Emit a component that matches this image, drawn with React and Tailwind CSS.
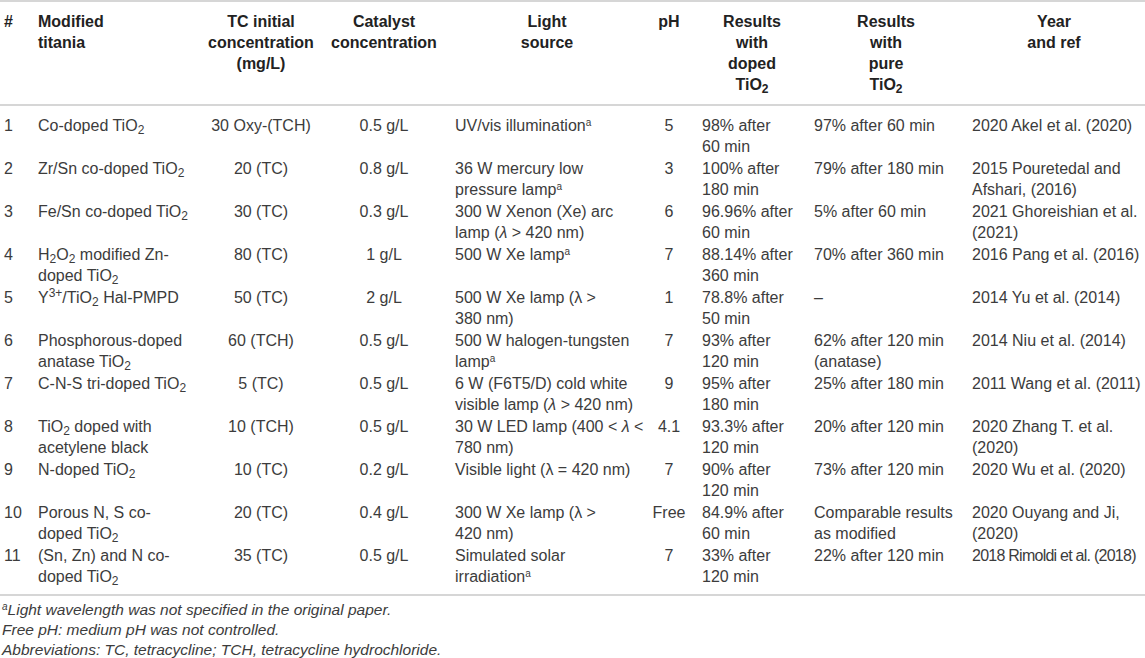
import React from "react";

const T = () => (
  <>
    TiO<sub>2</sub>
  </>
);
const A = () => <sup className="text-[10px]">a</sup>;
const L = ({ it }) => (it ? <span className="italic">λ</span> : <>λ</>);

const rows = [
  ["1", [<>Co-doped <T /></>], ["30 Oxy-(TCH)"], ["0.5 g/L"], [<>UV/vis illumination<A /></>], ["5"], ["98% after", "60 min"], ["97% after 60 min"], ["2020 Akel et al. (2020)"]],
  ["2", [<>Zr/Sn co-doped <T /></>], ["20 (TC)"], ["0.8 g/L"], ["36 W mercury low", <>pressure lamp<A /></>], ["3"], ["100% after", "180 min"], ["79% after 180 min"], ["2015 Pouretedal and", "Afshari, (2016)"]],
  ["3", [<>Fe/Sn co-doped <T /></>], ["30 (TC)"], ["0.3 g/L"], ["300 W Xenon (Xe) arc", <>lamp (<L it /> &gt; 420 nm)</>], ["6"], ["96.96% after", "60 min"], ["5% after 60 min"], ["2021 Ghoreishian et al.", "(2021)"]],
  ["4", [<>H<sub>2</sub>O<sub>2</sub> modified Zn-</>, <>doped <T /></>], ["80 (TC)"], ["1 g/L"], [<>500 W Xe lamp<A /></>], ["7"], ["88.14% after", "360 min"], ["70% after 360 min"], ["2016 Pang et al. (2016)"]],
  ["5", [<>Y<sup>3+</sup>/<T /> Hal-PMPD</>], ["50 (TC)"], ["2 g/L"], [<>500 W Xe lamp (<L /> &gt;</>, "380 nm)"], ["1"], ["78.8% after", "50 min"], ["–"], ["2014 Yu et al. (2014)"]],
  ["6", ["Phosphorous-doped", <>anatase <T /></>], ["60 (TCH)"], ["0.5 g/L"], ["500 W halogen-tungsten", <>lamp<A /></>], ["7"], ["93% after", "120 min"], ["62% after 120 min", "(anatase)"], ["2014 Niu et al. (2014)"]],
  ["7", [<>C-N-S tri-doped <T /></>], ["5 (TC)"], ["0.5 g/L"], ["6 W (F6T5/D) cold white", <>visible lamp (<L it /> &gt; 420 nm)</>], ["9"], ["95% after", "180 min"], ["25% after 180 min"], ["2011 Wang et al. (2011)"]],
  ["8", [<><T /> doped with</>, "acetylene black"], ["10 (TCH)"], ["0.5 g/L"], [<>30 W LED lamp (400 &lt; <L it /> &lt;</>, "780 nm)"], ["4.1"], ["93.3% after", "120 min"], ["20% after 120 min"], ["2020 Zhang T. et al.", "(2020)"]],
  ["9", [<>N-doped <T /></>], ["10 (TC)"], ["0.2 g/L"], [<>Visible light (<L /> = 420 nm)</>], ["7"], ["90% after", "120 min"], ["73% after 120 min"], ["2020 Wu et al. (2020)"]],
  ["10", ["Porous N, S co-", <>doped <T /></>], ["20 (TC)"], ["0.4 g/L"], [<>300 W Xe lamp (<L /> &gt;</>, "420 nm)"], ["Free"], ["84.9% after", "60 min"], ["Comparable results", "as modified"], ["2020 Ouyang and Ji,", "(2020)"]],
  ["11", ["(Sn, Zn) and N co-", <>doped <T /></>], ["35 (TC)"], ["0.5 g/L"], ["Simulated solar", <>irradiation<A /></>], ["7"], ["33% after", "120 min"], ["22% after 120 min"], [<span className="tracking-[-0.75px]">2018 Rimoldi et al. (2018)</span>]],
];

const widths = ["w-[34px]", "w-[171px]", "w-[112px]", "w-[134px]", "w-[192px]", "w-[52px]", "w-[114px]", "w-[154px]", "w-[182px]"];
const bodyAlign = [
  "pl-[4px] text-left",
  "pl-[4px] text-left",
  "text-center",
  "text-center",
  "pl-[4px] text-left",
  "text-center",
  "pl-[7px] text-left",
  "pl-[5px] text-left",
  "pl-[9px] text-left",
];

const headers = [
  { lines: ["#"], cls: "pl-[4px] text-left" },
  { lines: ["Modified", "titania"], cls: "pl-[4px] text-left" },
  { lines: ["TC initial", "concentration", "(mg/L)"], cls: "text-center" },
  { lines: ["Catalyst", "concentration"], cls: "text-center" },
  { lines: ["Light", "source"], cls: "text-center" },
  { lines: ["pH"], cls: "text-center" },
  { lines: ["Results", "with", "doped", <><T /></>], cls: "text-center" },
  { lines: ["Results", "with", "pure", <><T /></>], cls: "text-center" },
  { lines: ["Year", "and ref"], cls: "text-center" },
];

function Lines({ lines }) {
  return lines.map((l, i) => (
    <div key={i} className="whitespace-nowrap">
      {l}
    </div>
  ));
}

export default function App() {
  return (
    <div className="w-[1145px] h-[658px] overflow-hidden bg-white font-['Liberation_Sans',Arial,sans-serif] text-[#3c3c3c]">
      <table className="table-fixed border-collapse w-[1145px]">
        <colgroup>
          {widths.map((w, i) => (
            <col key={i} className={w} />
          ))}
        </colgroup>
        <thead>
          <tr className="border-t-2 border-b-2 border-[#d6d6d6]">
            {headers.map((h, i) => (
              <th key={i} className={`${h.cls} align-top font-bold text-[16px] leading-[21px] text-[#222] pt-[9px] pb-[9px]`}>
                <Lines lines={h.lines} />
              </th>
            ))}
          </tr>
        </thead>
        <tbody className="border-b-2 border-[#d6d6d6]">
          {rows.map((r, ri) => (
            <tr key={ri}>
              {r.map((c, ci) => (
                <td
                  key={ci}
                  className={`${bodyAlign[ci]} align-top text-[16px] leading-[20.5px] ${ri === 0 ? "pt-[10px]" : "pt-[1px]"} ${ri === rows.length - 1 ? "pb-[7px]" : "pb-[1px]"}`}
                >
                  {Array.isArray(c) ? <Lines lines={c} /> : c}
                </td>
              ))}
            </tr>
          ))}
        </tbody>
      </table>
      <div className="pt-[4px] pl-[2px] italic text-[15.5px] leading-[20px] text-[#3c3c3c]">
        <div>
          <sup className="text-[10px]">a</sup>Light wavelength was not specified in the original paper.
        </div>
        <div>Free pH: medium pH was not controlled.</div>
        <div>Abbreviations: TC, tetracycline; TCH, tetracycline hydrochloride.</div>
      </div>
    </div>
  );
}
